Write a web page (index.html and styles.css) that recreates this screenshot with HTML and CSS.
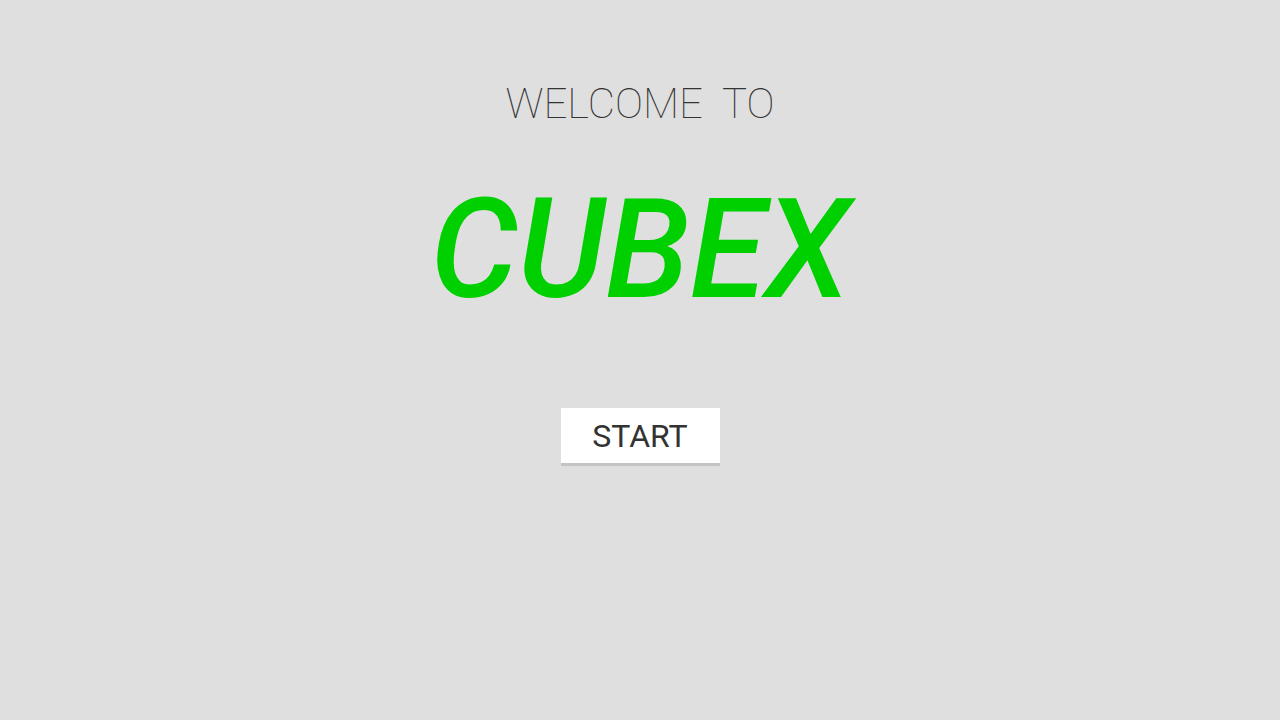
FILE: index.html
```html
<!DOCTYPE html>
<html>
<head>
<meta charset="utf-8">
<link rel="stylesheet" href="styles.css">
</head>
<body>
<main class="screen">
  <div class="welcome">WELCOME&nbsp; TO</div>
  <h1 class="title">CUBEX</h1>
  <button class="start">START</button>
</main>
</body>
</html>
```
FILE: styles.css
```css
html, body {
  margin: 0;
  padding: 0;
  background: #dfdfdf;
  width: 1280px;
  height: 720px;
  overflow: hidden;
}
.screen {
  display: flex;
  flex-direction: column;
  align-items: center;
  font-family: Roboto, "Liberation Sans", sans-serif;
}
.welcome {
  margin-top: 78px;
  font-size: 42px;
  font-weight: 100;
  line-height: 52px;
  color: #333;
}
.title {
  margin: 45px 0 0 0;
  font-size: 138px;
  font-style: italic;
  font-weight: 500;
  line-height: 150px;
  color: #00d000;
}
.start {
  margin-top: 83px;
  width: 159px;
  height: 58px;
  background: #fff;
  border: none;
  border-bottom: 3px solid #c4c4c4;
  font-family: Roboto, "Liberation Sans", sans-serif;
  font-size: 32px;
  color: #333;
  padding: 0;
}
```
